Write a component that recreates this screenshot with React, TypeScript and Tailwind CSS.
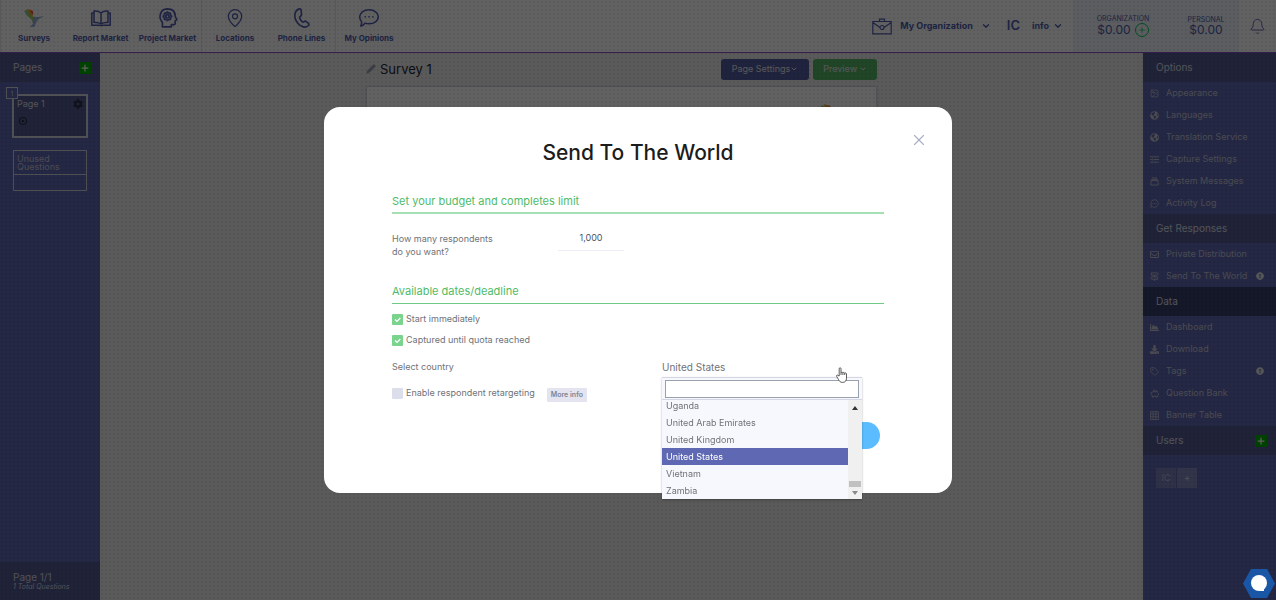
import { useState, type ComponentType } from 'react'
import { Bell, ChevronDown, Image, MapPin, MessageCircleMore, Pencil, Plus, Tag, X } from 'lucide-react'
import {
  FaChartArea,
  FaCog,
  FaDownload,
  FaExclamationCircle,
  FaGlobeAmericas,
  FaRegEnvelope,
} from 'react-icons/fa'

interface IconProps {
  className?: string
}

interface MenuItem {
  label: string
  icon: ComponentType<IconProps>
  alert?: boolean
}

function HummingbirdIcon({ className }: IconProps) {
  return (
    <svg viewBox="0 0 20 18" className={className} aria-hidden="true">
      <path d="M7 9C9 7 12 8 14 8L20 7 14 10.500 12 14 10.500 18 6 18 9 14.500Z" fill="#9fb3d9" />
      <path d="M0 2 4 1 8 10 3 7Z" fill="#8fc9e8" />
      <path d="M1 1 7 2 9 8 9 12 4 7Z" fill="#9bd25a" />
      <path d="M3 0 8 1 9 4 8 9Z" fill="#f0a33a" />
      <path d="M6 2 9 2 9 6Z" fill="#e5533d" />
    </svg>
  )
}

function BookIcon({ className }: IconProps) {
  return (
    <svg viewBox="0 0 20 16" className={className} fill="none" stroke="currentColor" strokeWidth="1.2" strokeLinejoin="round" aria-hidden="true">
      <path d="M10 3C8 1 5.500 .7 3 1v11.500c2.500-.3 5 0 7 1.500 2-1.500 4.500-1.800 7-1.500V1c-2.500-.3-5 0-7 2zM10 3v11" />
      <path d="M3 3H.8v12.200h7.700c.5.5 2.500.5 3 0h7.700V3H17" />
    </svg>
  )
}

function HeadGearIcon({ className }: IconProps) {
  return (
    <svg viewBox="0 0 18 18" className={className} fill="none" stroke="currentColor" strokeWidth="1.200" strokeLinejoin="round" aria-hidden="true">
      <path d="M4 17v-4C.5 9.500 1 1 8.500.8c5 0 7 3 7 6.700L17 10.500l-1.500.8v2.700c0 .8-.7 1-1.500 1h-2v2z" />
      <circle cx="8.500" cy="7.500" r="1.500" />
      <circle cx="8.500" cy="7.500" r="3.300" />
      <path d="M8.500 3v1.200M8.500 10.800V12M4 7.500h1.200M11.800 7.500H13M5.300 4.300l.9.9M10.800 9.800l.9.9M11.700 4.300l-.9.9M6.200 9.800l-.9.900" />
    </svg>
  )
}

function HandsetIcon({ className }: IconProps) {
  return (
    <svg viewBox="0 0 14 18" className={className} fill="none" stroke="currentColor" strokeWidth="1.200" strokeLinejoin="round" aria-hidden="true">
      <path d="M4.500.8c-5 2-5 8.500-1.500 12.700 3 3.700 7.500 4.800 9.800 2.300.6-.7.500-1.600-.2-2.200l-1.700-1.300c-.8-.6-1.600-.4-2.200.3-1.200 1.200-5-3.900-3.400-5 .9-.4 1.400-1 1.200-2L6.200 2C6 1 5.300.6 4.500.8z" />
    </svg>
  )
}

function OpinionsIcon({ className }: IconProps) {
  return (
    <svg viewBox="0 0 20 18" className={className} fill="none" stroke="currentColor" strokeWidth="1.200" strokeLinejoin="round" aria-hidden="true">
      <path d="M10 .8c5.200 0 9.300 3 9.300 7s-4.100 7-9.300 7c-1.500 0-2.800-.2-4-.7-1 1.700-2.500 2.800-4.300 3 .7-1.300 1-2.700.9-4.300C1.300 11.500.7 9.700.7 7.800c0-4 4.100-7 9.300-7z" />
      <path d="M5.500 7.800h1.400M9.300 7.800h1.400M13.100 7.800h1.400" strokeWidth="1.600" />
    </svg>
  )
}

function BriefcaseIcon({ className }: IconProps) {
  return (
    <svg viewBox="0 0 20 17" className={className} fill="none" stroke="currentColor" strokeWidth="1.200" aria-hidden="true">
      <path d="M.8 3.500h18.400v12.300H.8zM.8 4.500 8 9.500M19.200 4.500 12 9.500M7.500 3.300V1.200h5v2.100" />
      <circle cx="10" cy="9.500" r="2" />
    </svg>
  )
}

function StackIcon({ className }: IconProps) {
  return (
    <svg viewBox="0 0 10 10" className={className} fill="none" stroke="currentColor" aria-hidden="true">
      <path d="M1 4h8v5H1zM1.500 2.500h7M2.500 1h5" />
    </svg>
  )
}

function SlidersIcon({ className }: IconProps) {
  return (
    <svg viewBox="0 0 10 10" className={className} fill="none" stroke="currentColor" aria-hidden="true">
      <path d="M0 2h5.500M7.500 2H10M0 5h2M4 5h6M0 8h5.500M7.500 8H10M6.500.8v2.400M3 3.800v2.400M6.500 6.800v2.400" />
    </svg>
  )
}

function SignpostIcon({ className }: IconProps) {
  return (
    <svg viewBox="0 0 10 10" className={className} fill="none" stroke="currentColor" aria-hidden="true">
      <path d="M1.500 1h6.500l1.500 1.200L8 3.500H1.500zM8.500 5.500H2L.6 6.700 2 8h6.500zM5 3.500v2M5 8v2" />
    </svg>
  )
}

function PiggyIcon({ className }: IconProps) {
  return (
    <svg viewBox="0 0 10 10" className={className} fill="none" stroke="currentColor" strokeWidth=".9" strokeLinejoin="round" aria-hidden="true">
      <path d="M.5 4.500h1C2 3.500 3 3 4 3h2.500L8 2v1.700l1.500 1.500v1.300L8.300 7.300V9H6.500V8H4v1H2.500V7.300C1.500 6.500 1.200 5.500 1.500 4.500" />
      <circle cx="4.700" cy="1.700" r=".8" />
    </svg>
  )
}

function GridIcon({ className }: IconProps) {
  return (
    <svg viewBox="0 0 10 10" className={className} fill="none" stroke="currentColor" strokeWidth=".9" aria-hidden="true">
      <path d="M.5.800h9v8.700h-9zM.5 3.500h9M.5 6.500h9M3.500.800v8.700M6.500.800v8.700" />
    </svg>
  )
}

function HandCursor({ className }: IconProps) {
  return (
    <svg viewBox="0 0 12 16" className={className} fill="#fff" stroke="#333" strokeWidth=".8" strokeLinejoin="round" aria-hidden="true">
      <path d="M3.200 9V1.700c0-1.300 1.800-1.300 1.800 0v4c.2-.9 1.800-.8 1.900.2.300-.7 1.700-.6 1.800.4.400-.7 1.800-.4 1.800.6v4.300c0 2.600-1.400 4.200-3.900 4.200-2.200 0-3.100-.9-4-2.700L.6 9.300c-.5-1.100.7-1.600 1.300-.9z" />
      <path d="M5 5.700V8M6.900 6v2M8.700 6.400V8" />
    </svg>
  )
}

const navGroups = [
  [
    { label: 'Surveys', icon: HummingbirdIcon },
    { label: 'Report Market', icon: BookIcon },
    { label: 'Project Market', icon: HeadGearIcon },
  ],
  [
    { label: 'Locations', icon: MapPin },
    { label: 'Phone Lines', icon: HandsetIcon },
  ],
  [{ label: 'My Opinions', icon: OpinionsIcon }],
]

const optionItems: MenuItem[] = [
  { label: 'Appearance', icon: Image },
  { label: 'Languages', icon: FaGlobeAmericas },
  { label: 'Translation Service', icon: FaGlobeAmericas },
  { label: 'Capture Settings', icon: SlidersIcon },
  { label: 'System Messages', icon: StackIcon },
  { label: 'Activity Log', icon: MessageCircleMore },
]

const responseItems: MenuItem[] = [
  { label: 'Private Distribution', icon: FaRegEnvelope },
  { label: 'Send To The World', icon: SignpostIcon, alert: true },
]

const dataItems: MenuItem[] = [
  { label: 'Dashboard', icon: FaChartArea },
  { label: 'Download', icon: FaDownload },
  { label: 'Tags', icon: Tag, alert: true },
  { label: 'Question Bank', icon: PiggyIcon },
  { label: 'Banner Table', icon: GridIcon },
]

const countries = ['Uganda', 'United Arab Emirates', 'United Kingdom', 'United States', 'Vietnam', 'Zambia']

function Header() {
  return (
    <header className="flex h-[53px] items-stretch border-b border-[#8a4fc0] bg-white text-[#525eb0]">
      <nav className="flex">
        {navGroups.map((group, i) => (
          <div key={i} className="flex">
            {group.map(({ label, icon: Icon }) => (
              <a
                key={label}
                href="#"
                className="flex w-[67px] flex-col items-center border-gray-200 pt-2 text-[8px] leading-3 font-bold whitespace-nowrap first:border-l"
              >
                <Icon className="mb-1 h-5 w-5 stroke-[1.5]" />
                {label}
              </a>
            ))}
          </div>
        ))}
      </nav>
      <div className="ml-auto flex items-center">
        <button className="flex items-center gap-2 text-[9px] font-bold">
          <BriefcaseIcon className="h-[17px] w-5" />
          My Organization
          <ChevronDown className="h-2.5 w-2.5 stroke-3" />
        </button>
        <span className="ml-4 text-[13px] font-semibold">IC</span>
        <button className="mr-2.5 ml-3 flex items-center gap-1 text-[9px] font-bold">
          info
          <ChevronDown className="h-2.5 w-2.5 stroke-3" />
        </button>
        <div className="flex h-full w-[166px] items-center bg-[#eff5fb] text-center">
          <div className="w-[100px]">
            <p className="text-[7px] leading-2">ORGANIZATION</p>
            <p className="flex items-center justify-center gap-1 text-[12px] leading-3">
              $0.00
              <button aria-label="Add funds" className="flex h-3.5 w-3.5 items-center justify-center rounded-full border border-green-500 text-green-500">
                <Plus className="h-2 w-2" />
              </button>
            </p>
          </div>
          <div className="w-[66px]">
            <p className="text-[7px] leading-2">PERSONAL</p>
            <p className="text-[12px] leading-3">$0.00</p>
          </div>
        </div>
        <button aria-label="Notifications" className="flex w-[37px] justify-center">
          <Bell className="h-[17px] w-[17px] stroke-[1.3]" />
        </button>
      </div>
    </header>
  )
}

function AddButton({ label }: { label: string }) {
  return (
    <button aria-label={label} className="flex h-3 w-3 items-center justify-center bg-[#00b000] text-white">
      <Plus className="h-2.5 w-2.5 stroke-3" />
    </button>
  )
}

function PagesPanel() {
  return (
    <aside className="flex w-[100px] shrink-0 flex-col bg-[#5f69b3] text-[#dcdde6]">
      <div className="flex h-[29px] items-center justify-between bg-[#545d94] pr-[9px] pl-[13px]">
        <h2 className="text-[10px]">Pages</h2>
        <AddButton label="Add page" />
      </div>
      <div className="relative mx-3 mt-3 h-11 border-2 border-gray-300 bg-[#545d94]">
        <span className="absolute -top-[9px] -left-2 flex h-3 w-3 items-center justify-center border border-gray-300 bg-[#5f69b3] text-[6px]">1</span>
        <div className="flex h-4 items-center justify-between px-[3px] text-[9px]">
          Page 1
          <FaCog className="h-2.5 w-2.5 text-[#2b2f4a]" />
        </div>
        <svg viewBox="0 0 10 10" className="mt-1 ml-1 h-2.5 w-2.5 text-[#2b2f4a]" aria-hidden="true">
          <circle cx="5" cy="5" r="3.500" fill="none" stroke="currentColor" strokeWidth="1.200" />
          <circle cx="5" cy="5" r="1.300" fill="currentColor" />
        </svg>
      </div>
      <div className="mx-[13px] mt-3 border border-gray-300 text-[#c4c7dd]">
        <p className="border-b border-gray-300 px-[3px] pt-1 pb-[3px] text-[9px] leading-2">Unused Questions</p>
        <div className="h-[15px]" />
      </div>
      <div className="mt-auto h-[38px] bg-[#545d94] pt-[9px] pl-[13px] text-[#d5d7e4]">
        <p className="text-[10px] leading-3">Page 1/1</p>
        <p className="text-[7px] leading-2 italic">1 Total Questions</p>
      </div>
    </aside>
  )
}

function MenuList({ items }: { items: MenuItem[] }) {
  return (
    <ul>
      {items.map(({ label, icon: Icon, alert }) => (
        <li key={label}>
          <a href="#" className="flex h-[22px] items-center pr-3 pl-[7px] text-[9px] whitespace-nowrap text-[#c3c5d6]">
            <Icon className="mr-[7px] h-[9px] w-[9px]" />
            {label}
            {alert && <FaExclamationCircle className="ml-auto h-2 w-2 text-gray-200" />}
          </a>
        </li>
      ))}
    </ul>
  )
}

function OptionsPanel() {
  return (
    <aside className="w-[133px] shrink-0 bg-[#5f69b3] text-[#dcdde6]">
      <h2 className="h-[29px] bg-[#545d94] pl-[13px] text-[10px] leading-[29px]">Options</h2>
      <MenuList items={optionItems} />
      <h2 className="h-[29px] bg-[#545d94] pl-[13px] text-[10px] leading-[29px]">Get Responses</h2>
      <MenuList items={responseItems} />
      <h2 className="h-[29px] bg-[#373f6a] pl-[13px] text-[10px] leading-[29px]">Data</h2>
      <MenuList items={dataItems} />
      <div className="flex h-[29px] items-center justify-between bg-[#545d94] pr-[9px] pl-[13px]">
        <h2 className="text-[10px]">Users</h2>
        <AddButton label="Add user" />
      </div>
      <div className="mt-[13px] ml-[13px] flex gap-px text-[9px]">
        <span className="flex h-5 w-5 items-center justify-center bg-[#7981ba] text-[#b4b8d8]">IC</span>
        <button className="h-5 w-5 bg-[#858cc0]">+</button>
      </div>
    </aside>
  )
}

function Canvas() {
  return (
    <main className="flex-1 bg-[#ececee]">
      <div className="mx-auto flex w-[511px] max-w-full flex-col self-stretch">
        <div className="flex h-[33px] items-center gap-1 pb-px text-[9px] text-gray-200">
          <Pencil className="h-2.5 w-2.5 fill-current text-gray-400" />
          <h1 className="mr-auto pt-px text-[13px] text-gray-800">Survey 1</h1>
          <button className="flex h-[21px] items-center rounded-[3px] bg-[#535da0] px-[11px]">
            Page Settings
            <ChevronDown className="h-2 w-2 stroke-3" />
          </button>
          <button className="flex h-[21px] items-center gap-0.5 rounded-[3px] bg-[#58b868] px-2.5">
            Preview
            <ChevronDown className="h-2 w-2 stroke-3" />
          </button>
        </div>
        <div className="flex h-96 justify-end border border-gray-300 bg-white pt-4 pr-8 shadow-sm">
          <HummingbirdIcon className="h-6 w-6" />
        </div>
      </div>
    </main>
  )
}

function CheckRow({ label, defaultChecked }: { label: string; defaultChecked?: boolean }) {
  return (
    <label className="flex h-3 w-fit items-center gap-[3px]">
      <span className="grid h-[11px] w-[11px]">
        <input
          type="checkbox"
          defaultChecked={defaultChecked}
          className="peer col-start-1 row-start-1 h-[11px] w-[11px] appearance-none rounded-[1px] bg-[#dcdeec] checked:bg-[#7ad48e]"
        />
        <svg viewBox="0 0 11 11" className="pointer-events-none invisible col-start-1 row-start-1 peer-checked:visible" aria-hidden="true">
          <path d="M3 5.500 5 7.500 8.300 4" fill="none" stroke="#fff" strokeWidth="1.200" />
        </svg>
      </span>
      {label}
    </label>
  )
}

function CountryPicker() {
  const [country, setCountry] = useState('United States')
  const [query, setQuery] = useState('')

  const matches = countries.filter(name => name.toLowerCase().includes(query.toLowerCase()))

  return (
    <div className="relative w-[200px]">
      <select
        id="country"
        value={country}
        onChange={e => setCountry(e.target.value)}
        className="block h-3 w-full cursor-pointer appearance-none text-[10px] leading-3"
      >
        {countries.map(name => (
          <option key={name}>{name}</option>
        ))}
      </select>
      <div className="absolute top-4 left-0 z-10 w-full border-t border-[#d4d6e4] bg-[#f7f8fd] shadow-[0_1px_2px_rgba(0,0,0,0.3)]">
        <div className="border-b border-[#d4d6e4] px-[3px] pt-0.5 pb-px">
          <input
            type="text"
            aria-label="Search countries"
            value={query}
            onChange={e => setQuery(e.target.value)}
            className="block h-[18px] w-full border border-gray-400 bg-white px-1 outline-none"
          />
        </div>
        <div className="flex h-[99px]">
          <ul role="listbox" aria-label="Countries" className="flex flex-1 flex-col justify-end overflow-hidden">
            {matches.map(name => (
              <li
                key={name}
                role="option"
                aria-selected={name === country}
                onClick={() => setCountry(name)}
                className="h-[17px] shrink-0 cursor-pointer px-1 text-[9px] leading-[17px] aria-selected:bg-[#5f69b3] aria-selected:text-white"
              >
                {name}
              </li>
            ))}
          </ul>
          <div className="flex w-3.5 flex-col items-center bg-[#f0f0f0] py-1">
            <svg viewBox="0 0 6 4" className="mt-0.5 h-1 w-1.5" aria-hidden="true">
              <path d="M0 4 3 0 6 4Z" fill="#333" />
            </svg>
            <div className="mt-auto mb-1 h-1.5 w-3 bg-[#c1c1c1]" />
            <svg viewBox="0 0 6 4" className="h-1 w-1.5" aria-hidden="true">
              <path d="M0 0 3 4 6 0Z" fill="#888" />
            </svg>
          </div>
        </div>
      </div>
      <HandCursor className="pointer-events-none absolute top-1.5 left-[174px] z-20 h-4 w-3" />
    </div>
  )
}

function SendDialog() {
  return (
    <div
      role="dialog"
      aria-labelledby="send-title"
      className="relative w-[628px] max-w-full rounded-2xl bg-white px-[68px] pt-8 pb-11 text-[9px] leading-3 text-[#6f7278]"
    >
      <button aria-label="Close" className="absolute top-6 right-6 text-[#a9adc4]">
        <X className="h-[18px] w-[18px] stroke-[1.5]" />
      </button>
      <h2 id="send-title" className="text-center text-[21px] leading-7 font-medium text-[#1c1c1c]">
        Send To The World
      </h2>

      <h3 className="mt-6 border-b-2 border-[#a5dfb3] pb-px text-[11px] leading-5 text-[#4fbb68]">
        Set your budget and completes limit
      </h3>
      <div className="mt-[18px] flex">
        <label htmlFor="respondents" className="w-[166px] leading-[13px]">
          How many respondents
          <br />
          do you want?
        </label>
        <input
          id="respondents"
          type="text"
          defaultValue="1,000"
          className="h-[19px] w-[66px] border-b border-[#ececf6] pb-2 text-center text-[#4b5563]"
        />
      </div>

      <h3 className="mt-[23px] border-b border-[#6fcb84] pb-0.5 text-[11px] leading-5 text-[#4fbb68]">
        Available dates/deadline
      </h3>
      <div className="mt-[9px] space-y-[9px]">
        <CheckRow label="Start immediately" defaultChecked />
        <CheckRow label="Captured until quota reached" defaultChecked />
      </div>
      <div className="mt-[15px] flex justify-between pr-[22px]">
        <label htmlFor="country">Select country</label>
        <CountryPicker />
      </div>
      <div className="mt-3.5 flex items-start gap-3">
        <CheckRow label="Enable respondent retargeting" />
        <button className="mt-px h-3.5 rounded-[1px] bg-[#e4e4f0] px-1 text-[7px] font-semibold text-[#7b8494]">More info</button>
      </div>
      <div className="mt-5 flex justify-end pr-1">
        <button className="h-[27px] w-[88px] rounded-full bg-[#5bbcff] text-white">Next</button>
      </div>
    </div>
  )
}

export default function App() {
  return (
    <div className="flex min-h-screen flex-col overflow-x-hidden font-['Inter',sans-serif]">
      <Header />
      <div className="flex flex-1">
        <PagesPanel />
        <Canvas />
        <OptionsPanel />
      </div>

      <div className="fixed inset-0 flex items-center justify-center bg-black/62 bg-[radial-gradient(rgba(0,0,0,0.06)_1px,transparent_1px)] bg-size-[4px_4px]">
        <SendDialog />
      </div>

      {/* chat launcher */}
      <button aria-label="Open chat" className="fixed right-px bottom-0.5">
        <svg viewBox="0 0 32 29" className="h-[29px] w-8" aria-hidden="true">
          <path d="M8 0h16l8 14.500L24 29H8L0 14.500Z" fill="#1a56a6" />
          <circle cx="16" cy="14" r="8" fill="#fff" />
          <path d="M16 22h5v-4Z" fill="#fff" />
        </svg>
      </button>
    </div>
  )
}
